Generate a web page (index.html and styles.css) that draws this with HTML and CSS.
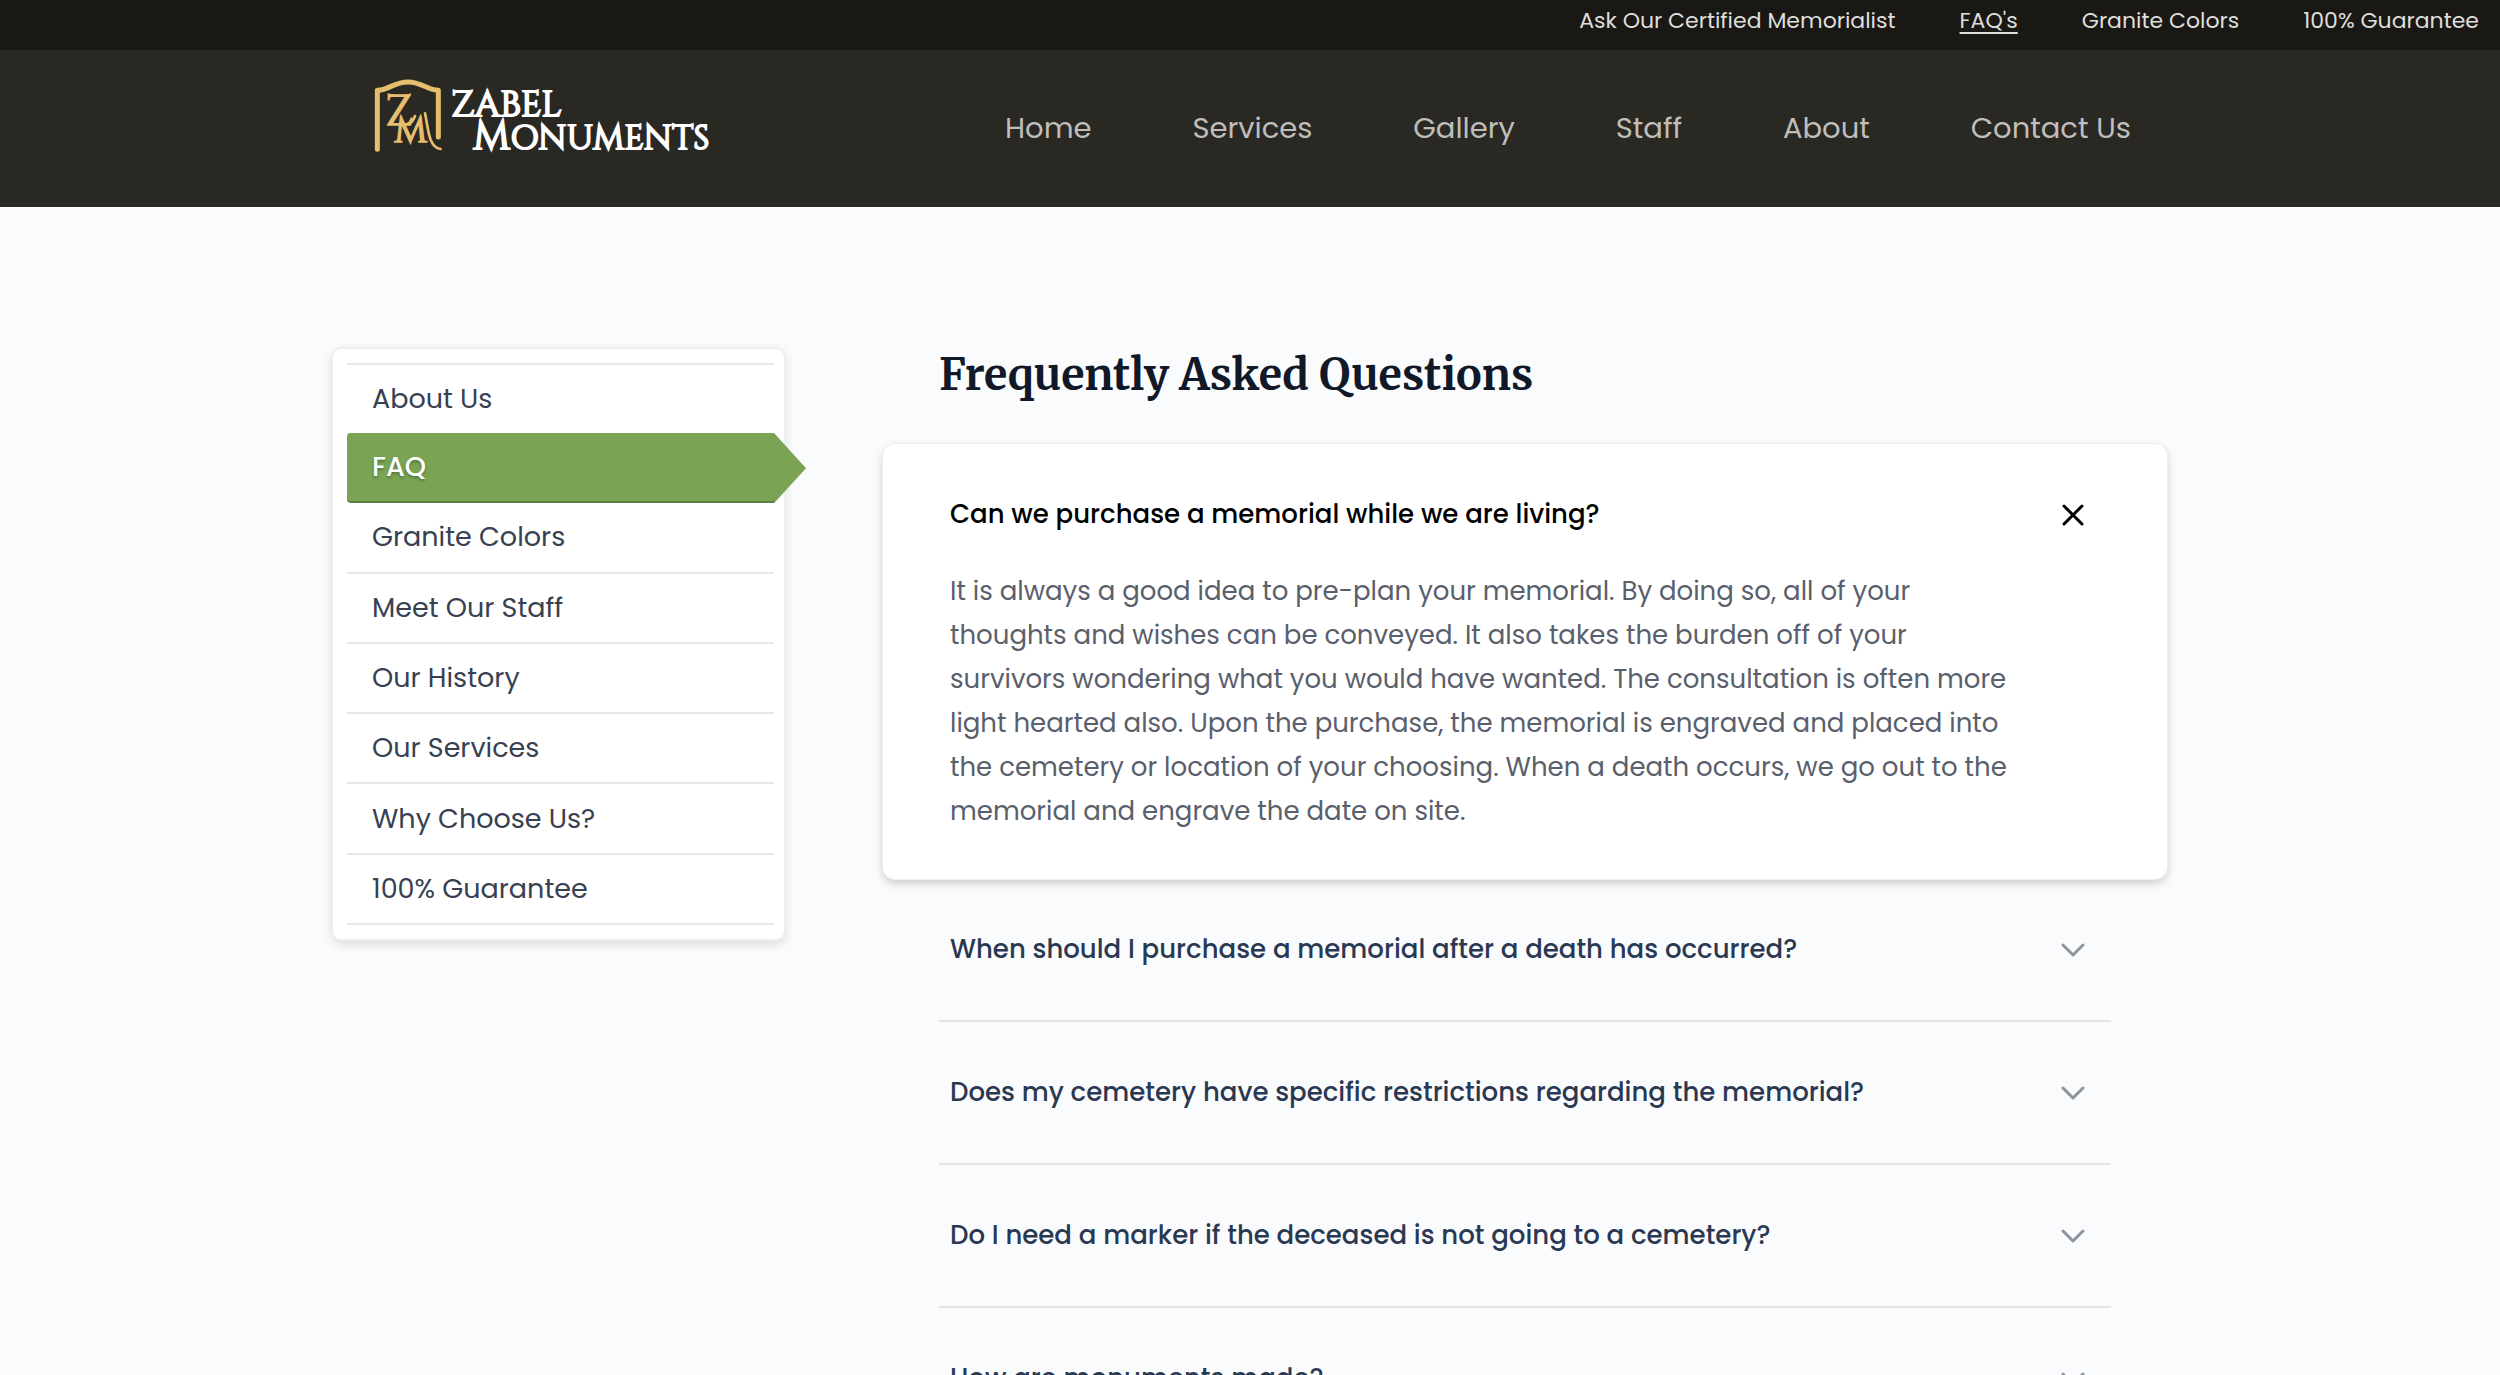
FILE: index.html
```html
<!DOCTYPE html>
<html lang="en">
<head>
<meta charset="utf-8">
<meta name="viewport" content="width=device-width, initial-scale=1">
<title>FAQ | Zabel Monuments</title>
<link rel="stylesheet" href="styles.css">
</head>
<body>
<header>
  <nav class="topbar" aria-label="Quick links">
    <a href="#memorialist">Ask Our Certified Memorialist</a>
    <a href="#faq" class="current">FAQ's</a>
    <a href="#colors">Granite Colors</a>
    <a href="#guarantee">100% Guarantee</a>
  </nav>
  <div class="masthead">
    <div class="container masthead-inner">
      <a class="logo" href="#home">
        <svg class="logo-mark" viewBox="66 54 210 222" aria-hidden="true">
          <path class="frame" d="M79 268V91C110 91 130 66 171 66S230 91 262 91V231"/>
          <text x="103" y="194" font-size="128">Z</text>
          <text x="130" y="246" font-size="106">M</text>
          <path class="swash" d="M222 160C232 205 232 262 269 267M150 191C166 197 184 192 192 168"/>
        </svg>
        <span class="logo-name">
          <span class="logo-line">ZABEL</span>
          <span class="logo-line second"><span class="initial">M</span>ONUMENTS</span>
        </span>
      </a>
      <nav class="mainnav" aria-label="Main">
        <a href="#home">Home</a>
        <a href="#services">Services</a>
        <a href="#gallery">Gallery</a>
        <a href="#staff">Staff</a>
        <a href="#about">About</a>
        <a href="#contact">Contact Us</a>
      </nav>
    </div>
  </div>
</header>

<main class="container page">
  <aside class="sidebar">
    <ul class="menu">
      <li><a href="#about-us">About Us</a></li>
      <li class="active"><a href="#faq" aria-current="page">FAQ</a></li>
      <li><a href="#colors">Granite Colors</a></li>
      <li><a href="#staff">Meet Our Staff</a></li>
      <li><a href="#history">Our History</a></li>
      <li><a href="#services">Our Services</a></li>
      <li><a href="#why">Why Choose Us?</a></li>
      <li><a href="#guarantee">100% Guarantee</a></li>
    </ul>
  </aside>

  <section class="faq" id="faq">
    <h1>Frequently Asked Questions</h1>
    <div class="item open">
      <button type="button" aria-expanded="true" aria-controls="answer-1">
        <span>Can we purchase a memorial while we are living?</span>
        <svg class="icon" viewBox="0 0 24 24" aria-hidden="true"><path d="M3 3L21 21M21 3L3 21"/></svg>
      </button>
      <p id="answer-1">It is always a good idea to pre-plan your memorial. By doing so, all of your<br>
      thoughts and wishes can be conveyed. It also takes the burden off of your<br>
      survivors wondering what you would have wanted. The consultation is often more<br>
      light hearted also. Upon the purchase, the memorial is engraved and placed into<br>
      the cemetery or location of your choosing. When a death occurs, we go out to the<br>
      memorial and engrave the date on site.</p>
    </div>
    <div class="item">
      <button type="button" aria-expanded="false">
        <span>When should I purchase a memorial after a death has occurred?</span>
        <svg class="icon" viewBox="0 0 24 24" aria-hidden="true"><path d="M2 7L12 17L22 7"/></svg>
      </button>
    </div>
    <div class="item">
      <button type="button" aria-expanded="false">
        <span>Does my cemetery have specific restrictions regarding the memorial?</span>
        <svg class="icon" viewBox="0 0 24 24" aria-hidden="true"><path d="M2 7L12 17L22 7"/></svg>
      </button>
    </div>
    <div class="item">
      <button type="button" aria-expanded="false">
        <span>Do I need a marker if the deceased is not going to a cemetery?</span>
        <svg class="icon" viewBox="0 0 24 24" aria-hidden="true"><path d="M2 7L12 17L22 7"/></svg>
      </button>
    </div>
    <div class="item">
      <button type="button" aria-expanded="false">
        <span>How are monuments made?</span>
        <svg class="icon" viewBox="0 0 24 24" aria-hidden="true"><path d="M2 7L12 17L22 7"/></svg>
      </button>
    </div>
  </section>
</main>
</body>
</html>
```
FILE: styles.css
```css
* {
  box-sizing: border-box;
}

body {
  margin: 0;
  background: #fafbfd;
  color: #374151;
  font-family: Poppins, Inter, "Open Sans", sans-serif;
  font-size: 26px;
  line-height: 44px;
}

a {
  color: inherit;
  text-decoration: none;
}

.container {
  width: 100%;
  max-width: 1834px;
  margin: 0 auto;
}

/* Header */
.topbar {
  display: flex;
  justify-content: flex-end;
  gap: 64px;
  padding: 0 21px 8px;
  background: #1a1814;
  color: #dededc;
  font-size: 22px;
  line-height: 42px;
}

.topbar .current {
  text-decoration: underline;
  text-underline-offset: 4px;
}

.masthead {
  background: #2a2823;
  color: #bfbeba;
}

.masthead-inner {
  display: flex;
  justify-content: space-between;
  align-items: flex-start;
  padding: 28px 36px 52px 40px;
}

.logo {
  display: flex;
  gap: 8px;
  color: #fff;
}

.logo-mark {
  width: 70px;
  height: 74px;
  overflow: visible;
  fill: #e5bd6e;
  font-family: Cinzel, "Liberation Serif", serif;
  stroke: #e5bd6e;
  stroke-width: 5;
}

.frame,
.swash {
  fill: none;
  stroke-linecap: round;
  stroke-linejoin: round;
}

.frame {
  stroke-width: 15;
}

.swash {
  stroke-width: 8;
}

.logo-name {
  padding-top: 11px;
  font-family: Cinzel, "Liberation Serif", serif;
  font-size: 36px;
  -webkit-text-stroke: 2px #fff;
}

.logo-line {
  display: block;
  line-height: 32px;
}

.second {
  padding-left: 22px;
  font-size: 34px;
}

.initial {
  font-size: 40px;
}

.mainnav {
  display: flex;
  flex: 0 1 1126px;
  justify-content: space-between;
  padding-top: 28px;
  font-size: 29px;
}

/* Page columns */
.page {
  display: flex;
  align-items: flex-start;
  gap: 99px;
  padding-top: 142px;
}

.sidebar {
  flex: 0 0 451px;
  padding: 14px 10px 14px 14px;
  border-radius: 8px;
  background: #fff;
  box-shadow: 0 0 0 2px #eceef0, 0 4px 12px rgba(0, 0, 0, 0.16);
}

.menu {
  display: flex;
  flex-direction: column;
  min-height: 562px;
  margin: 0;
  padding: 0;
  border-top: 2px solid #e5e7eb;
  font-size: 27px;
  list-style: none;
}

.menu li {
  display: flex;
  flex: 1 0 auto;
  align-items: center;
  border-bottom: 2px solid #e5e7eb;
}

.menu li:first-child {
  flex-grow: 0;
}

.menu a {
  flex: 1;
  padding: 12px 25px;
}

.menu .active {
  position: relative;
  margin-top: -2px;
  border-bottom-color: #5e8141;
  border-radius: 4px 0 0 4px;
  background: #7aa454;
  color: #fff;
  font-weight: 500;
  text-shadow: 0 2px 3px rgba(0, 0, 0, 0.3);
}

.menu .active::after {
  position: absolute;
  top: 0;
  bottom: -2px;
  left: 100%;
  width: 32px;
  background: #7aa454;
  clip-path: polygon(0 0, 100% 50%, 0 100%);
  content: "";
}

/* Questions */
.faq {
  flex: 1;
  min-width: 0;
}

h1 {
  margin: 0 56px 43px;
  color: #111827;
  font-family: Merriweather, "DejaVu Serif Condensed", "DejaVu Serif", serif;
  font-size: 43px;
  font-weight: 700;
  line-height: 52px;
}

.item {
  margin: 0 56px;
  border-bottom: 2px solid #e2e4e6;
}

.item button {
  display: flex;
  justify-content: space-between;
  align-items: center;
  width: 100%;
  padding: 48px 26px 48px 11px;
  border: 0;
  background: none;
  color: #2a3852;
  font: inherit;
  font-weight: 500;
  line-height: 45px;
  text-align: left;
}

.icon {
  flex: none;
  width: 24px;
  height: 24px;
  fill: none;
  stroke: #8d939f;
  stroke-linecap: round;
  stroke-linejoin: round;
  stroke-width: 3;
}

.open {
  margin: 0;
  padding: 48px 56px 46px;
  border: 0;
  border-radius: 12px;
  background: #fff;
  box-shadow: 0 0 0 1px #eceef0, 0 4px 10px rgba(0, 0, 0, 0.2);
}

.open button {
  padding-top: 0;
  padding-bottom: 0;
  color: #000;
}

.open .icon {
  stroke: #000;
}

.open p {
  margin: 32px 11px 0;
  color: #59606c;
}
```
